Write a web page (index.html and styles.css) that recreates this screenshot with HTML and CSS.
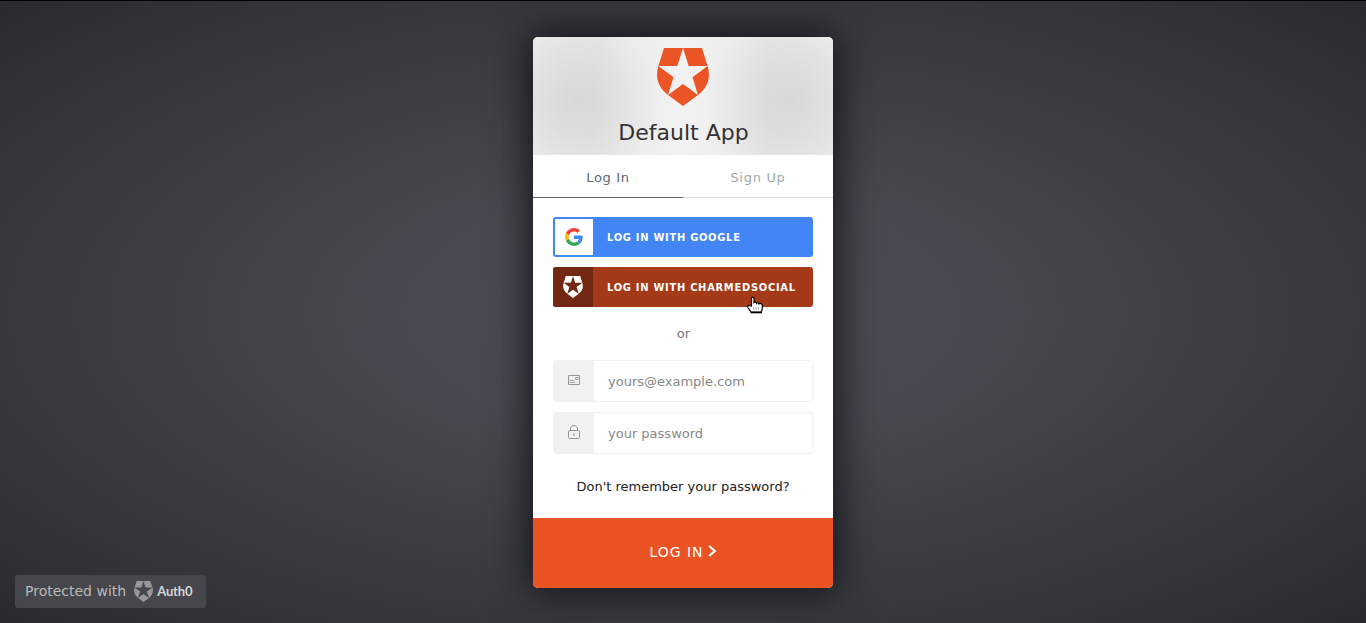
FILE: index.html
```html
<!DOCTYPE html>
<html lang="en">
<head>
<meta charset="utf-8">
<title>Default App</title>
<link rel="stylesheet" href="styles.css">
</head>
<body>
<svg class="defs" width="0" height="0">
  <symbol id="shield" viewBox="0 0 52 58">
    <path d="M7 0H26L20.3 18H1.4ZM26 0H45L50.6 18H31.7ZM1.4 18L16.5 29.2L11 47C1 39.500-2 29 1.400 18ZM50.600 18L35.500 29.200L41 47C51 39.500 54 29 50.600 18ZM11 47L26 36L41 47L26 58Z"/>
  </symbol>
</svg>
<main class="page">
  <form class="lock">
    <header class="header">
      <svg class="logo"><use href="#shield"/></svg>
      <h1 class="title">Default App</h1>
    </header>
    <nav class="tabs">
      <a class="tab active">Log In</a>
      <a class="tab">Sign Up</a>
    </nav>
    <div class="content">
      <button type="button" class="social google">
        <span class="social-icon">
          <svg width="18" height="18" viewBox="0 0 48 48"><path fill="#EA4335" d="M24 9.5c3.540 0 6.710 1.220 9.210 3.600l6.850-6.850C35.900 2.380 30.470 0 24 0 14.620 0 6.510 5.380 2.560 13.220l7.980 6.190C12.430 13.720 17.740 9.500 24 9.500z"/><path fill="#4285F4" d="M46.980 24.550c0-1.570-.15-3.090-.38-4.550H24v9.020h12.940c-.58 2.960-2.260 5.480-4.780 7.180l7.730 6c4.510-4.180 7.090-10.360 7.090-17.650z"/><path fill="#FBBC05" d="M10.530 28.590c-.48-1.450-.76-2.990-.76-4.590s.27-3.140.76-4.590l-7.980-6.190C.92 16.460 0 20.120 0 24c0 3.880.92 7.540 2.560 10.780l7.970-6.190z"/><path fill="#34A853" d="M24 48c6.480 0 11.930-2.130 15.890-5.810l-7.730-6c-2.150 1.450-4.920 2.300-8.160 2.300-6.260 0-11.570-4.220-13.470-9.910l-7.980 6.190C6.510 42.620 14.620 48 24 48z"/></svg>
        </span>
        <span class="social-text">LOG IN WITH GOOGLE</span>
      </button>
      <button type="button" class="social charmed">
        <span class="social-icon"><svg width="20" height="22"><use href="#shield"/></svg></span>
        <span class="social-text">LOG IN WITH CHARMEDSOCIAL</span>
        <svg class="pointer" width="17" height="19" viewBox="0 0 17 19">
          <path fill="#fff" stroke="#000" stroke-width="1.200" d="M4.500 10V2.300C4.500.7 7 .7 7 2.300V6.500C7.500 5.800 9.300 6 9.500 7.200C10 6.400 11.800 6.700 12 7.900C12.700 7.100 15.300 7.500 15.300 9.500V12.500L14.300 16.400H4.200L1 11.800C.3 10.200 1.200 9 2.500 9.600Z"/>
          <path stroke="#000" stroke-width="1" stroke-opacity=".3" d="M6.500 11v3M9 11v3M11.500 11v3"/>
          <path stroke="#000" stroke-width="1.800" d="M3.700 16.400h11"/>
        </svg>
      </button>
      <p class="or">or</p>
      <label class="field">
        <span class="field-icon">
          <svg width="12" height="10" viewBox="0 0 12 10" fill="none" stroke="#999"><path d="M.5.5h11v9H.5z"/><path d="M1.500 5.500h5M1.500 7.500h5.500M7.500 2.500h2.500v2H7.500z" stroke-opacity=".85"/></svg>
        </span>
        <input type="email" placeholder="yours@example.com">
      </label>
      <label class="field">
        <span class="field-icon">
          <svg width="12" height="14" viewBox="0 0 12 14" fill="none" stroke="#939393"><rect x=".5" y="5.500" width="11" height="8" rx="1.200"/><path d="M2.500 5.500V4C2.500-.6 9.500-.6 9.500 4v1.500M6 8v3"/></svg>
        </span>
        <input type="password" placeholder="your password">
      </label>
      <a class="forgot">Don't remember your password?</a>
    </div>
    <button type="button" class="submit">
      <span>LOG IN</span>
      <svg width="9" height="12" viewBox="0 0 9 12"><path d="M1.200 1L6.800 6L1.200 11" fill="none" stroke="#fff" stroke-width="2.200"/></svg>
    </button>
  </form>
  <a class="badge">
    <span class="badge-label">Protected with</span>
    <svg width="19" height="21"><use href="#shield"/></svg>
    <span class="badge-brand">Auth0</span>
  </a>
</main>
</body>
</html>
```
FILE: styles.css
```css
* { box-sizing: border-box; }
body {
  margin: 0;
  font-family: "DejaVu Sans", sans-serif;
  font-size: 13px;
}
.defs { position: absolute; }
.page {
  height: 623px;
  overflow: hidden;
  position: relative;
  display: flex;
  justify-content: center;
  align-items: flex-start;
  padding-top: 36px;
  border-top: 1px solid #000;
  background: radial-gradient(ellipse farthest-corner at center, #4c4c55 0%, #494951 28%, #36363c 75%, #2a2a2e 100%);
}
.lock {
  width: 300px;
  height: 551px;
  display: flex;
  flex-direction: column;
  background: #fff;
  border-radius: 5px;
  box-shadow: 0 0 40px 4px #111118;
}
.header {
  height: 118px;
  flex: none;
  padding-top: 11px;
  display: flex;
  flex-direction: column;
  align-items: center;
  border-radius: 5px 5px 0 0;
  background:
    radial-gradient(ellipse 85px 82px at 42px 64px, rgba(0,0,0,.075), rgba(0,0,0,.05) 40%, transparent),
    radial-gradient(ellipse 85px 82px at 258px 64px, rgba(0,0,0,.075), rgba(0,0,0,.05) 40%, transparent),
    linear-gradient(90deg, #ececec, #e8e8e8 20%, #f2f2f2 50%, #e8e8e8 80%, #ececec);
}
.logo { width: 52px; height: 58px; fill: #eb5424; }
.title {
  margin: 14px 0 0 1px;
  font-size: 22px;
  line-height: 26px;
  font-weight: 400;
  color: #333;
}
.tabs { height: 43px; flex: none; display: flex; }
.tab {
  flex: 1;
  padding-top: 1px;
  text-align: center;
  line-height: 43px;
  letter-spacing: .7px;
  color: #a3a7ab;
  border-bottom: 1px solid #dcdcde;
}
.tab.active { color: #5c666f; border-color: #5c666f; }
.content {
  padding: 19px 20px 0;
  height: 320px;
  display: flex;
  flex-direction: column;
}
.social {
  position: relative;
  height: 40px;
  margin: 0 0 10px;
  padding: 0;
  border: 0;
  border-radius: 3px;
  display: flex;
  align-items: center;
  text-align: left;
  color: #fff;
  font: 700 11px "DejaVu Sans Condensed", "DejaVu Sans", sans-serif;
  font-stretch: condensed;
  letter-spacing: .73px;
}
.social-icon {
  width: 40px;
  height: 40px;
  flex: none;
  display: flex;
  align-items: center;
  justify-content: center;
}
.social-text { padding-left: 14px; white-space: nowrap; }
.google { background: #4285f4; }
.google .social-icon { width: 38px; height: 36px; margin-left: 2px; background: #fff; }
.charmed { background: #a53a19; cursor: pointer; }
.charmed .social-icon { background: #722812; border-radius: 3px 0 0 3px; fill: #fff; }
.pointer { position: absolute; left: 194px; top: 29px; }
.or {
  margin: 8px 0 18px 1px;
  text-align: center;
  line-height: 17px;
  color: #757575;
}
.field {
  height: 42px;
  margin-bottom: 10px;
  display: flex;
  border: 1px solid #f1f1f1;
  border-radius: 3px;
  overflow: hidden;
}
.field-icon {
  width: 40px;
  flex: none;
  background: #f1f1f1;
  display: flex;
  align-items: center;
  justify-content: center;
  padding-bottom: 2px;
}
.field input {
  flex: 1;
  min-width: 0;
  border: 0;
  padding: 0 14px;
  outline: 0;
  background: #fff;
  font: 13px "DejaVu Sans", sans-serif;
}
.field input::placeholder { color: #888; opacity: 1; }
.forgot {
  margin: 14px 0 0;
  text-align: center;
  line-height: 17px;
  color: #222;
}
.submit {
  height: 70px;
  padding: 0 0 2px;
  border: 0;
  border-radius: 0 0 5px 5px;
  background: #ea5323;
  color: #fff;
  display: flex;
  align-items: center;
  justify-content: center;
  gap: 4px;
  font: 14px "DejaVu Sans", sans-serif;
  letter-spacing: 1px;
}
.submit svg { margin-bottom: 2px; }
.badge {
  position: absolute;
  left: 15px;
  bottom: 15px;
  width: 191px;
  height: 33px;
  padding-left: 10px;
  border-radius: 3px;
  display: flex;
  align-items: center;
  background: #46464c;
  font-size: 14px;
  color: #bababd;
  fill: #98989c;
}
.badge-label { padding-bottom: 2px; }
.badge svg { margin-left: 8px; }
.badge-brand {
  margin-left: 4px;
  padding-bottom: 2px;
  font: 700 13px Lato, sans-serif;
  letter-spacing: -.15px;
  color: #d5d5d7;
}
```
